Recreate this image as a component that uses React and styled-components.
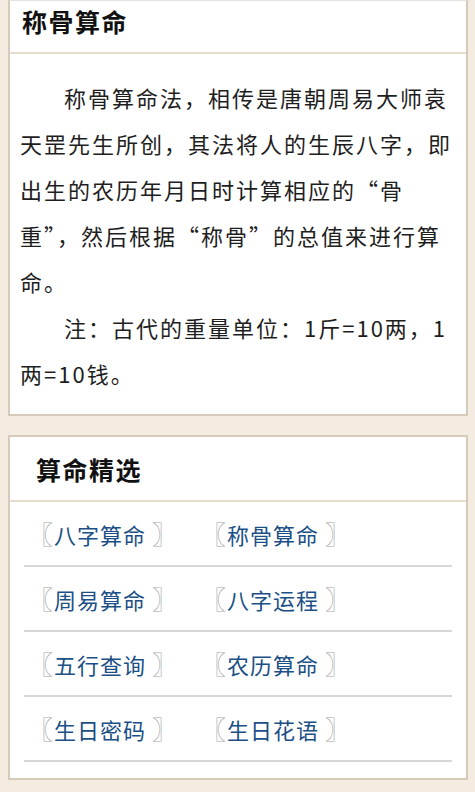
import React from 'react';
import styled, { createGlobalStyle } from 'styled-components';

const Global = createGlobalStyle`
  html, body { margin: 0; padding: 0; background: #f4ece0; }
  body { font-family: "Noto Sans CJK SC", "Noto Sans", sans-serif; color: #1a1a1a; }
`;

const Page = styled.div`
  padding: 0 7px 11px 8px;
  display: flex;
  flex-direction: column;
  gap: 19px;
`;

const Card = styled.section`
  background: #fff;
  border: 2px solid #d6cab9;
  border-top: ${(p) => (p.$cut ? '1px solid #e6e3de' : '2px solid #d6cab9')};
  padding-bottom: ${(p) => p.$bottom || 0}px;
`;

const Header = styled.div`
  height: ${(p) => p.$h}px;
  padding-left: ${(p) => p.$left}px;
  border-bottom: 2px solid #e6ddd2;
  display: flex;
  align-items: ${(p) => (p.$top ? 'flex-start' : 'center')};
`;

const Title = styled.h2`
  margin: 0;
  font-size: 25px;
  line-height: 40px;
  font-weight: 700;
  letter-spacing: 1.5px;
  color: #111;
`;

const Body = styled.div`
  padding: 20px 12px 0 10px;
`;

const Para = styled.p`
  margin: 0;
  font-size: 22px;
  line-height: 46px;
  letter-spacing: 2px;
  text-indent: 44px;
  color: #1e1e1e;
`;

const List = styled.div`
  margin: 0 14px;
`;

const Row = styled.div`
  height: 63px;
  border-bottom: 2px solid #d7d7d7;
  display: grid;
  grid-template-columns: 173px 173px;
  align-items: center;
  padding-left: 4px;
`;

const Link = styled.a`
  display: flex;
  align-items: center;
  font-size: 22px;
  text-decoration: none;
  white-space: nowrap;
`;

const Bracket = styled.span`
  color: #a6a6a6;
  font-size: 25px;
  line-height: 1;
  margin: ${(p) => (p.$open ? '0 1px 0 0' : '0 0 0 6px')};
`;

const Name = styled.span`
  color: #1b4f86;
  letter-spacing: 1px;
`;

const links = [
  ['八字算命', '称骨算命'],
  ['周易算命', '八字运程'],
  ['五行查询', '农历算命'],
  ['生日密码', '生日花语'],
];

export default function App() {
  return (
    <>
      <Global />
      <Page>
        <Card $cut $bottom={18}>
          <Header $h={51} $left={12} $top>
            <Title>称骨算命</Title>
          </Header>
          <Body>
            <Para>
              称骨算命法，相传是唐朝周易大师袁天罡先生所创，其法将人的生辰八字，即出生的农历年月日时计算相应的“骨重”，然后根据“称骨”的总值来进行算命。
            </Para>
            <Para>注：古代的重量单位：1斤=10两，1两=10钱。</Para>
          </Body>
        </Card>
        <Card $bottom={16}>
          <Header $h={63} $left={26}>
            <Title>算命精选</Title>
          </Header>
          <List>
            {links.map((pair, i) => (
              <Row key={i}>
                {pair.map((name) => (
                  <Link key={name} href="#">
                    <Bracket $open>〖</Bracket>
                    <Name>{name}</Name>
                    <Bracket>〗</Bracket>
                  </Link>
                ))}
              </Row>
            ))}
          </List>
        </Card>
      </Page>
    </>
  );
}
